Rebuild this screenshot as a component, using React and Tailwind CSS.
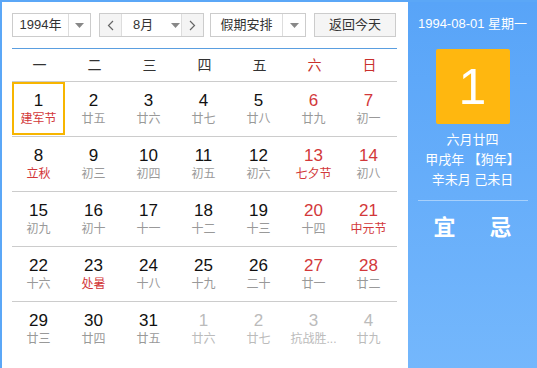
import React from "react";

const weekdays = ["一", "二", "三", "四", "五", "六", "日"];

// [day, lunar, holiday?, otherMonth?]
const days = [
  [1, "建军节", true], [2, "廿五"], [3, "廿六"], [4, "廿七"], [5, "廿八"], [6, "廿九"], [7, "初一"],
  [8, "立秋", true], [9, "初三"], [10, "初四"], [11, "初五"], [12, "初六"], [13, "七夕节", true], [14, "初八"],
  [15, "初九"], [16, "初十"], [17, "十一"], [18, "十二"], [19, "十三"], [20, "十四"], [21, "中元节", true],
  [22, "十六"], [23, "处暑", true], [24, "十八"], [25, "十九"], [26, "二十"], [27, "廿一"], [28, "廿二"],
  [29, "廿三"], [30, "廿四"], [31, "廿五"], [1, "廿六", false, true], [2, "廿七", false, true], [3, "抗战胜...", false, true], [4, "廿九", false, true],
];

const Caret = () => (
  <svg width="9" height="5" viewBox="0 0 9 5">
    <path d="M0 0h9L4.5 5z" fill="#888" />
  </svg>
);

function DayCell({ d, idx }) {
  const [num, lunar, holiday, other] = d;
  const weekend = idx % 7 >= 5;
  const selected = idx === 0;
  let numColor = "text-[#111]";
  if (weekend) numColor = "text-[#d2383a]";
  if (other) numColor = "text-[#bbb]";
  let lunarColor = "text-[#999]";
  if (holiday) lunarColor = "text-[#d2383a]";
  if (other) lunarColor = "text-[#bbb]";
  return (
    <div className="w-[55px] h-[54px]">
      <div
        className={
          "w-[53px] h-[53px] flex flex-col items-center pt-[7px] border-2 " +
          (selected ? "border-[#f7b500]" : "border-transparent")
        }
      >
        <div className={"text-[17px] leading-[20px] " + numColor}>{num}</div>
        <div className={"text-[12px] leading-[17px] whitespace-nowrap " + lunarColor}>{lunar}</div>
      </div>
    </div>
  );
}

export default function App() {
  const rows = [0, 1, 2, 3, 4].map((r) => days.slice(r * 7, r * 7 + 7));

  return (
    <div
      className="w-[537px] h-[368px] overflow-hidden bg-[#5ba7f7] pl-[2px] pt-[2px] flex"
      style={{ fontFamily: '"Liberation Sans", "Noto Sans CJK SC", sans-serif' }}
    >
      {/* 左侧日历 */}
      <div className="w-[406px] h-[366px] bg-white pl-[10px] pt-[11px]">
        <div className="flex items-center h-[24px] text-[13px] text-[#333] whitespace-nowrap">
          <div className="w-[79px] h-[24px] border border-[#ccc] flex">
            <div className="w-[55px] flex items-center justify-center">1994年</div>
            <div className="flex-1 border-l border-[#ddd] flex items-center justify-center">
              <Caret />
            </div>
          </div>
          <div className="ml-[8px] w-[105px] h-[24px] border border-[#ccc] flex">
            <div className="w-[22px] shrink-0 bg-[#f4f4f4] flex items-center justify-center border-r border-[#ddd]">
              <svg width="7" height="11" viewBox="0 0 7 11">
                <path d="M6 1L1.5 5.5 6 10" stroke="#666" strokeWidth="1.2" fill="none" />
              </svg>
            </div>
            <div className="flex-1 flex items-center pl-[11px]">
              <span>8月</span>
              <span className="ml-[18px] flex"><Caret /></span>
            </div>
            <div className="w-[22px] shrink-0 bg-[#f4f4f4] flex items-center justify-center border-l border-[#ddd]">
              <svg width="7" height="11" viewBox="0 0 7 11">
                <path d="M1 1l4.5 4.5L1 10" stroke="#666" strokeWidth="1.2" fill="none" />
              </svg>
            </div>
          </div>
          <div className="ml-[6px] w-[96px] h-[24px] border border-[#ccc] flex">
            <div className="w-[71px] flex items-center justify-center">假期安排</div>
            <div className="flex-1 border-l border-[#ddd] flex items-center justify-center">
              <Caret />
            </div>
          </div>
          <div className="ml-[8px] w-[82px] h-[24px] border border-[#ccc] bg-[#f5f5f5] flex items-center justify-center">
            返回今天
          </div>
        </div>

        <div className="mt-[11px] w-[385px] border-t border-[#5a9ee0]">
          <div className="grid grid-cols-7 h-[33px] border-b border-[#ccc] text-[14px]">
            {weekdays.map((w, i) => (
              <div
                key={w}
                className={"flex items-center justify-center " + (i >= 5 ? "text-[#c9302c]" : "text-[#333]")}
              >
                {w}
              </div>
            ))}
          </div>
          {rows.map((row, r) => (
            <div key={r} className={"flex " + (r < 4 ? "border-b border-[#ccc]" : "")}>
              {row.map((d, i) => (
                <DayCell key={i} d={d} idx={r * 7 + i} />
              ))}
            </div>
          ))}
        </div>
      </div>

      {/* 右侧详情 */}
      <div className="flex-1 h-[366px] bg-gradient-to-b from-[#58a4f8] to-[#74b7fc] flex flex-col items-center pt-[13px] text-white">
        <div className="text-[13px] leading-[18px]">1994-08-01 星期一</div>
        <div className="mt-[16px] w-[74px] h-[75px] bg-[#ffb70f] rounded-[2px] flex items-center justify-center text-[50px] font-light leading-none">
          1
        </div>
        <div className="mt-[6px] text-[13px] leading-[20px]">六月廿四</div>
        <div className="text-[13px] leading-[20px]">甲戌年 【狗年】</div>
        <div className="text-[13px] leading-[20px]">辛未月 己未日</div>
        <div className="mt-[10px] w-[110px] border-t border-[#a7d0fb]" />
        <div className="mt-[14px] flex gap-[34px] text-[22px] leading-[26px] font-bold">
          <span>宜</span>
          <span>忌</span>
        </div>
      </div>
    </div>
  );
}
